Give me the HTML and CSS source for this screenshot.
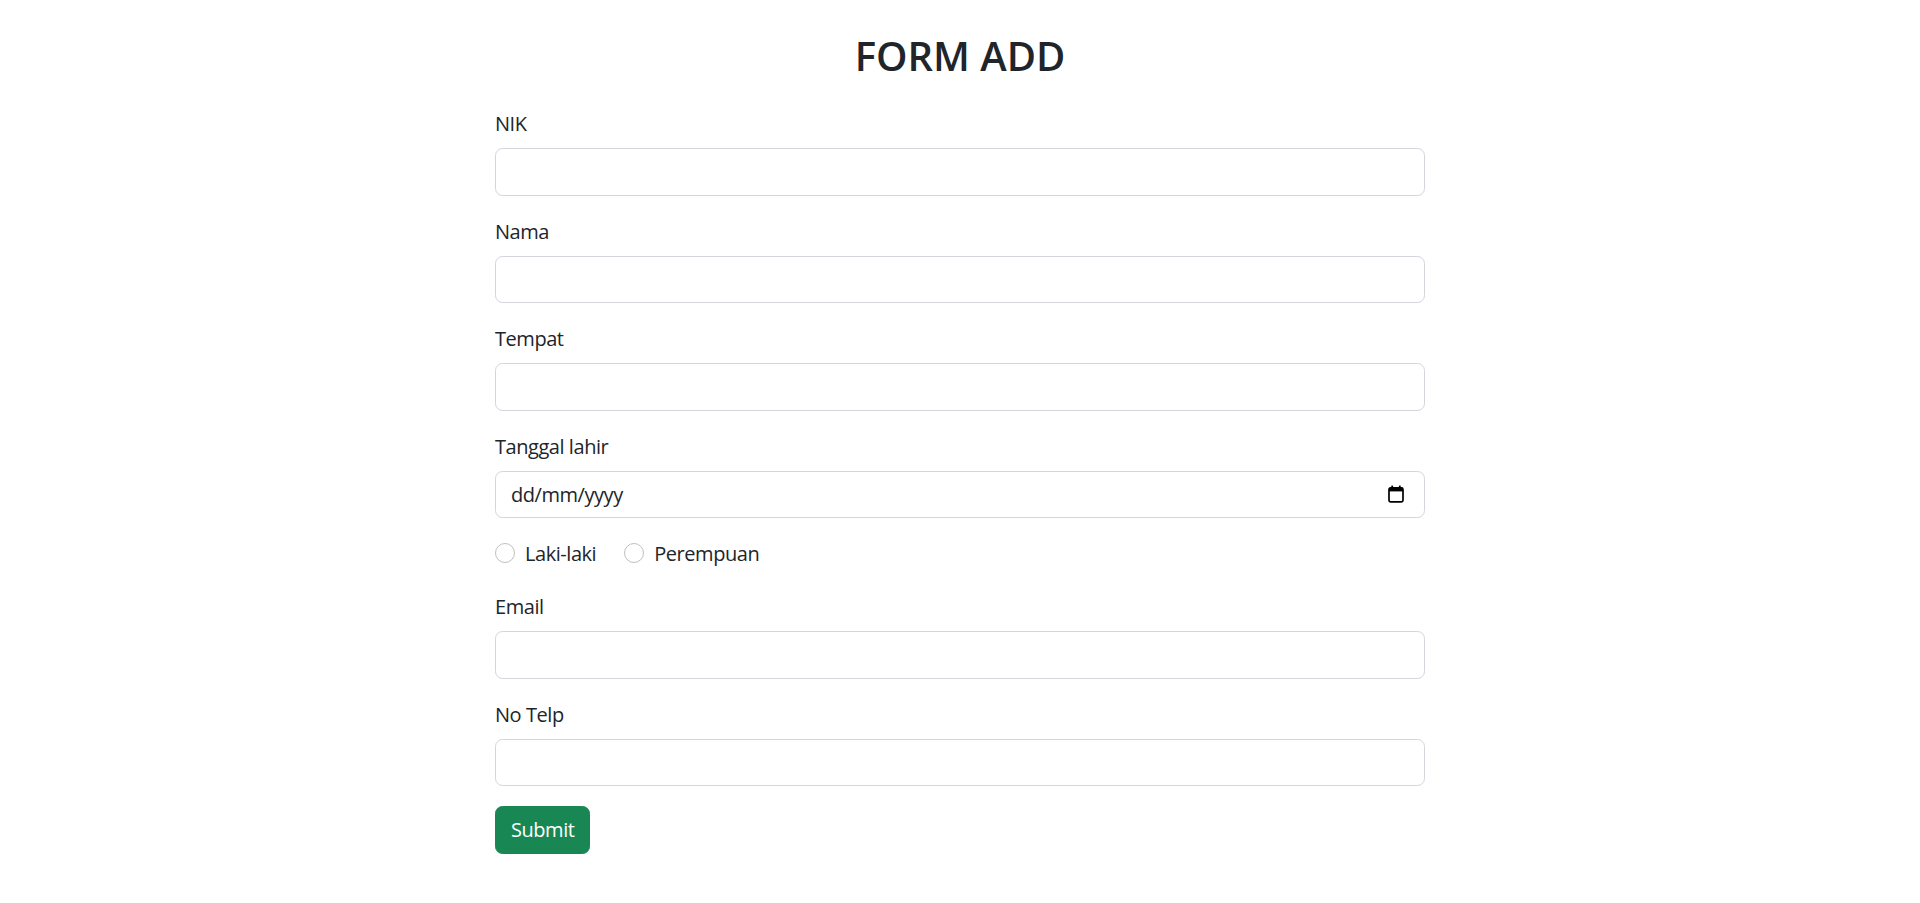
FILE: index.html
```html
<!DOCTYPE html>
<html lang="id">
<head>
<meta charset="utf-8">
<title>Form Add</title>
<link rel="stylesheet" href="styles.css">
</head>
<body>
<div class="container">
  <h2 class="title">FORM ADD</h2>
  <form class="form">
    <div class="field">
      <label class="label" for="nik">NIK</label>
      <input class="control" type="text" id="nik">
    </div>
    <div class="field">
      <label class="label" for="nama">Nama</label>
      <input class="control" type="text" id="nama">
    </div>
    <div class="field">
      <label class="label" for="tempat">Tempat</label>
      <input class="control" type="text" id="tempat">
    </div>
    <div class="field">
      <label class="label" for="tgl">Tanggal lahir</label>
      <div class="date-wrap">
        <input class="control date" type="text" id="tgl" placeholder="dd/mm/yyyy">
        <svg class="cal-icon" width="16" height="18" viewBox="0 0 16 18" aria-hidden="true">
          <rect x="1" y="2.8" width="14" height="14" rx="1.6" fill="none" stroke="#000" stroke-width="1.7"/>
          <rect x="1" y="2.8" width="14" height="3.6" fill="#000"/>
          <rect x="3.3" y="0.6" width="1.8" height="3" fill="#000"/>
          <rect x="10.9" y="0.6" width="1.8" height="3" fill="#000"/>
        </svg>
      </div>
    </div>
    <div class="radios">
      <label class="check"><input class="radio" type="radio" name="jk" value="L"><span>Laki-laki</span></label>
      <label class="check"><input class="radio" type="radio" name="jk" value="P"><span>Perempuan</span></label>
    </div>
    <div class="field">
      <label class="label" for="email">Email</label>
      <input class="control" type="text" id="email">
    </div>
    <div class="field">
      <label class="label" for="telp">No Telp</label>
      <input class="control" type="text" id="telp">
    </div>
    <button class="btn-submit" type="button">Submit</button>
  </form>
</div>
</body>
</html>
```
FILE: styles.css
```css
* { box-sizing: border-box; }
html, body { margin: 0; padding: 0; background: #fff; }
body {
  font-family: "Open Sans", "Noto Sans", sans-serif;
  font-size: 20px;
  line-height: 30px;
  letter-spacing: -0.45px;
  color: #212529;
}
.container {
  width: 930px;
  margin: 0 auto;
  padding-top: 32px;
}
.title {
  margin: 0 0 28px;
  text-align: center;
  font-size: 40px;
  line-height: 48px;
  font-weight: 600;
  letter-spacing: 0;
}
.form { display: flex; flex-direction: column; align-items: stretch; }
.field { margin-bottom: 20px; }
.label {
  display: block;
  line-height: 30px;
  padding-top: 1px;
  margin-bottom: 9px;
}
.control {
  display: block;
  width: 100%;
  height: 47.5px;
  padding: 7.5px 15px;
  font: inherit;
  letter-spacing: -0.45px;
  color: #212529;
  background: #fff;
  border: 1px solid #d2d5da;
  border-radius: 7.5px;
  outline: none;
}
.date-wrap { position: relative; }
.date::placeholder { color: #212529; opacity: 1; }
.cal-icon {
  position: absolute;
  right: 21px;
  top: 14px;
}
.radios {
  display: flex;
  height: 30px;
  margin-bottom: 23px;
}
.check {
  display: flex;
  align-items: flex-start;
  margin-right: 28px;
}
.check span { padding-top: 1px; }
.radio {
  appearance: none;
  -webkit-appearance: none;
  width: 20px;
  height: 20px;
  margin: 5px 10px 0 0;
  border: 1px solid #bfbfbf;
  border-radius: 50%;
  background: #fff;
}
.btn-submit {
  align-self: flex-start;
  height: 47.5px;
  padding: 7.5px 15px;
  font: inherit;
  letter-spacing: -0.45px;
  color: #fff;
  background: #198754;
  border: 1px solid #198754;
  border-radius: 7.5px;
}
```
